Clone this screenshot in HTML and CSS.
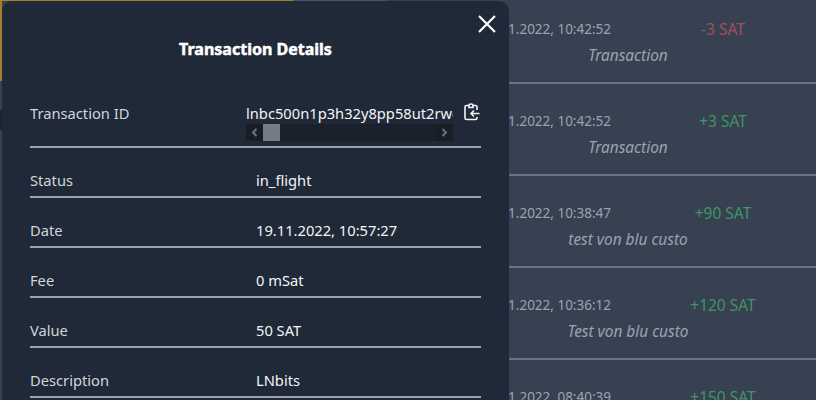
FILE: index.html
```html
<!DOCTYPE html>
<html lang="en">
<head>
<meta charset="utf-8">
<title>Transaction Details</title>
<link rel="stylesheet" href="styles.css">
</head>
<body>
<div class="toprule"><span class="toprule-gold"></span><span class="toprule-grey"></span></div>
<main class="list">
  <article class="tx">
    <div class="tx-top"><span class="tx-date">19.11.2022, 10:42:52</span><span class="tx-amount neg">-3 SAT</span></div>
    <div class="tx-desc">Transaction</div>
  </article>
  <article class="tx">
    <div class="tx-top"><span class="tx-date">19.11.2022, 10:42:52</span><span class="tx-amount pos">+3 SAT</span></div>
    <div class="tx-desc">Transaction</div>
  </article>
  <article class="tx">
    <div class="tx-top"><span class="tx-date">19.11.2022, 10:38:47</span><span class="tx-amount pos">+90 SAT</span></div>
    <div class="tx-desc">test von blu custo</div>
  </article>
  <article class="tx">
    <div class="tx-top"><span class="tx-date">19.11.2022, 10:36:12</span><span class="tx-amount pos">+120 SAT</span></div>
    <div class="tx-desc">Test von blu custo</div>
  </article>
  <article class="tx">
    <div class="tx-top"><span class="tx-date">19.11.2022, 08:40:39</span><span class="tx-amount pos">+150 SAT</span></div>
  </article>
</main>
<div class="strip"></div>
<section class="modal">
  <button class="close" aria-label="Close">
    <svg width="18" height="18" viewBox="0 0 18 18"><path d="M1 1L17 17M17 1L1 17" fill="none" stroke="#fff" stroke-width="2.2"/></svg>
  </button>
  <h2 class="title">Transaction Details</h2>
  <div class="details">
    <div class="detail detail-id">
      <span class="label">Transaction ID</span>
      <div class="id-box">
        <div class="id-text">lnbc500n1p3h32y8pp58ut2rwqk7d3xv9</div>
        <div class="fake-scroll">
          <svg class="arrow" width="17" height="17" viewBox="0 0 17 17"><path d="M10.500 5L7 8.500L10.500 12" fill="none" stroke="#6b7280" stroke-width="2"/></svg>
          <span class="thumb"></span>
          <span class="track"></span>
          <svg class="arrow" width="17" height="17" viewBox="0 0 17 17"><path d="M6.500 5L10 8.500L6.500 12" fill="none" stroke="#6b7280" stroke-width="2"/></svg>
        </div>
      </div>
      <svg class="copy" width="16" height="18" viewBox="0 0 16 18"><path d="M9 2.500H11.500Q13 2.500 13 4V7M13 14V15Q13 16.500 11.500 16.500H2.500Q1 16.500 1 15V4Q1 2.500 2.500 2.500H5M5 4.500V2.500Q5 1 7 1Q9 1 9 2.500V4.500ZM15.500 10.500H7M10 7.500L7 10.500L10 13.500" fill="none" stroke="#f3f4f6" stroke-width="1.600"/></svg>
    </div>
    <div class="detail"><span class="label">Status</span><span class="value">in_flight</span></div>
    <div class="detail"><span class="label">Date</span><span class="value">19.11.2022, 10:57:27</span></div>
    <div class="detail"><span class="label">Fee</span><span class="value">0 mSat</span></div>
    <div class="detail"><span class="label">Value</span><span class="value">50 SAT</span></div>
    <div class="detail"><span class="label">Description</span><span class="value">LNbits</span></div>
  </div>
</section>
</body>
</html>
```
FILE: styles.css
```css
* { box-sizing: border-box; }
html, body { margin: 0; height: 100%; }
body {
  position: relative;
  overflow: hidden;
  background: #374151;
  font-family: "Noto Sans", "Open Sans", sans-serif;
  font-size: 14.700px;
}
.toprule { position: absolute; top: 0; left: 0; display: flex; height: 1px; }
.toprule-gold { width: 293px; background: #a67f2c; }
.toprule-grey { width: 93px; background: #4b5563; }
.list { margin-top: -8px; }
.tx { height: 92px; padding-top: 26px; border-bottom: 2px solid #6b7280; color: #9ca3af; }
.tx-top { display: flex; height: 22px; align-items: center; }
.tx-date { width: 611px; text-align: right; font-size: 13.500px; }
.tx-amount { width: 120px; margin-left: 52px; text-align: center; font-size: 15.500px; }
.neg { color: #a0505c; }
.pos { color: #3f9563; }
.tx-desc { width: 200px; margin: 5px 0 0 528px; height: 22px; line-height: 22px; text-align: center; font-style: italic; font-size: 15.400px; }
.strip {
  position: absolute; left: 0; top: 0; width: 2px; height: 400px;
  background: linear-gradient(#a67f2c 0 81px, #374151 81px 110px, #1f2530 110px 130px, #374151 130px 400px);
}
.modal {
  position: absolute; left: 2px; top: 1px; width: 507px; height: 399px; overflow: hidden;
  border-radius: 10px 10px 0 0; background: #1f2937; padding: 0 28px;
}
.close {
  position: absolute; top: 14px; left: 476px; padding: 0; border: 0; background: none; display: flex;
}
.title { margin: 38px 0 0; height: 20px; line-height: 20px; text-align: center; color: #fff; font-size: 16px; font-weight: 700; -webkit-text-stroke: 0.5px #fff; }
.details { margin-top: 39px; color: #e5e7eb; }
.detail { display: flex; height: 50px; align-items: center; padding-top: 16px; border-bottom: 2px solid #9ca3af; }
.detail-id { height: 50px; align-items: flex-start; padding-top: 5px; }
.label { width: 226px; color: #d1d5db; line-height: 20px; }
.detail-id .label { width: 216px; }
.value { color: #f3f4f6; line-height: 20px; }
.id-box { width: 207px; }
.id-text { overflow: hidden; white-space: nowrap; line-height: 21px; color: #f3f4f6; height: 21px; }
.fake-scroll { display: flex; height: 17px; background: #1b212c; }
.arrow { flex: none; background: #181d26; }
.thumb { width: 17px; background: #767b85; }
.track { flex: 1; }
.copy { margin: 0 0 0 11px; }
```
